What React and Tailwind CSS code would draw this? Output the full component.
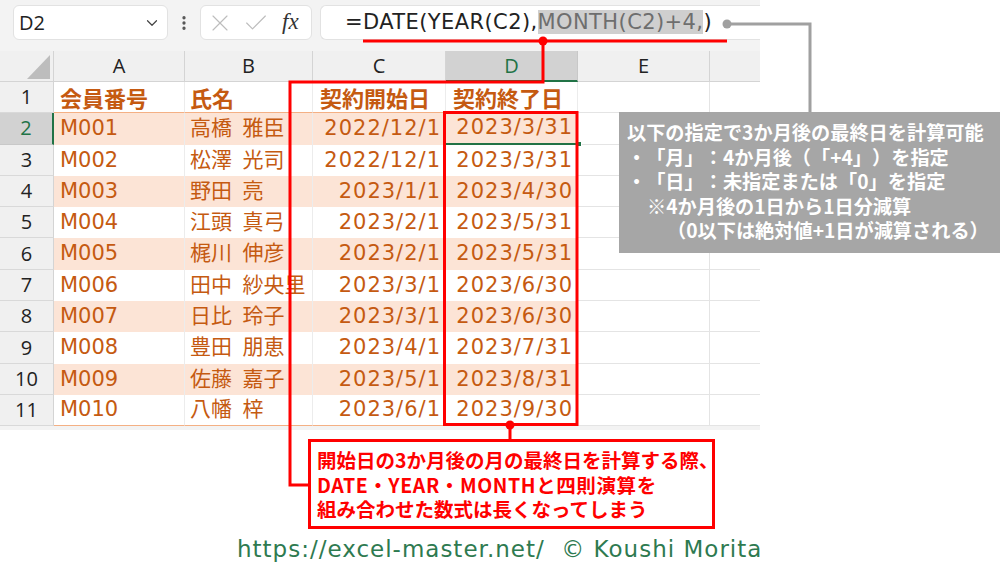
import React from "react";
import { ChevronDown, X, Check, EllipsisVertical } from "lucide-react";

const rows = [
  ["M001", "高橋 雅臣", "2022/12/1", "2023/3/31"],
  ["M002", "松澤 光司", "2022/12/1", "2023/3/31"],
  ["M003", "野田 亮", "2023/1/1", "2023/4/30"],
  ["M004", "江頭 真弓", "2023/2/1", "2023/5/31"],
  ["M005", "梶川 伸彦", "2023/2/1", "2023/5/31"],
  ["M006", "田中 紗央里", "2023/3/1", "2023/6/30"],
  ["M007", "日比 玲子", "2023/3/1", "2023/6/30"],
  ["M008", "豊田 朋恵", "2023/4/1", "2023/7/31"],
  ["M009", "佐藤 嘉子", "2023/5/1", "2023/8/31"],
  ["M010", "八幡 梓", "2023/6/1", "2023/9/30"],
];

const cellFont = { fontFamily: '"DejaVu Sans", "Noto Sans CJK JP", sans-serif' };
const uiFont = { fontFamily: '"Open Sans", "Noto Sans", sans-serif' };
const jpFont = { fontFamily: '"Noto Sans CJK JP", sans-serif' };

function ColHeader({ label, selected, last }) {
  return (
    <div
      className={
        "flex items-center justify-center text-[20px] border-r border-b " +
        (selected
          ? "bg-[#d2d2d2] text-[#217346] border-b-2 border-b-[#217346] border-r-[#c8c8c8]"
          : "bg-[#f0f0f0] text-[#222] border-r-[#d4d4d4] border-b-[#d4d4d4]") +
        (last ? " border-r-0" : "")
      }
      style={uiFont}
    >
      {label}
    </div>
  );
}

function RowHeader({ n, selected }) {
  return (
    <div
      className={
        "flex items-center justify-center text-[20px] border-b " +
        (selected
          ? "bg-[#d2d2d2] text-[#217346] border-b-[#c8c8c8] border-r-2 border-r-[#217346]"
          : "bg-[#f0f0f0] text-[#222] border-b-[#d9d9d9] border-r border-r-[#d4d4d4]")
      }
      style={uiFont}
    >
      {n}
    </div>
  );
}

export default function App() {
  return (
    <div className="relative w-[1000px] h-[563px] bg-white overflow-hidden [text-spacing-trim:space-all]">
      <div className="w-[760px] bg-[#f3f3f3]">
        {/* Formula bar */}
        <div className="flex items-start h-[51px] pt-[5px]">
          <div className="ml-[13px] w-[155px] h-[35px] bg-white rounded-[6px] border border-[#e2e2e2] flex items-center justify-between pl-[5px] pr-[6px]">
            <span className="text-[20px] text-[#222]" style={uiFont}>D2</span>
            <ChevronDown size={18} strokeWidth={1.6} className="text-[#444]" />
          </div>
          <div className="w-[32px] h-[35px] flex items-center justify-center text-[#555]">
            <EllipsisVertical size={18} strokeWidth={2.4} />
          </div>
          <div className="w-[112px] h-[35px] bg-white rounded-[6px] border border-[#e2e2e2] flex items-center pl-[5px] gap-[8px]">
            <X size={28} strokeWidth={1} className="text-[#bdbdbd]" />
            <Check size={28} strokeWidth={1} className="text-[#bdbdbd]" />
            <span className="italic text-[23px] text-[#333] ml-[4px]" style={{ fontFamily: '"Liberation Serif", serif' }}>fx</span>
          </div>
          <div className="ml-[8px] flex-1 h-[35px] bg-white rounded-l-[6px] border border-r-0 border-[#e2e2e2] flex items-center pl-[24px]">
            <span className="text-[21px] tracking-[0.4px] text-[#222] whitespace-nowrap" style={cellFont}>
              =DATE(YEAR(C2),
              <span className="bg-[#cfcfcf] text-[#6e6e6e]">MONTH(C2)+4,</span>)
            </span>
          </div>
        </div>

        {/* Grid */}
        <div className="grid grid-cols-[54px_131px_128px_133px_132px_132px_50px] grid-rows-[31px_repeat(11,31.3px)] bg-white">
          <div className="bg-[#f0f0f0] border-r border-b border-[#d4d4d4] relative">
            <svg width="54" height="31" className="absolute inset-0">
              <polygon points="50,4 50,28 27,28" fill="#bdbdbd" />
            </svg>
          </div>
          <ColHeader label="A" />
          <ColHeader label="B" />
          <ColHeader label="C" />
          <ColHeader label="D" selected />
          <ColHeader label="E" />
          <ColHeader label="" last />

          {/* Row 1 header */}
          <RowHeader n={1} />
          {["会員番号", "氏名", "契約開始日", "契約終了日"].map((t, i) => (
            <div
              key={t}
              className={
                "bg-white flex items-center font-bold text-[22px] text-[#c55a11] border-b border-b-[#f4b084] border-r border-r-[#ececec] whitespace-nowrap overflow-hidden " +
                (i === 0 ? "pl-[6px]" : i === 1 ? "pl-[5px]" : "pl-[7px]")
              }
              style={jpFont}
            >
              {t}
            </div>
          ))}
          <div className="border-r border-b border-[#e4e4e4]" />
          <div className="border-b border-[#e4e4e4]" />

          {rows.map((r, idx) => {
            const band = idx % 2 === 0;
            const last = idx === rows.length - 1;
            const bg = band ? "bg-[#fce4d6]" : "bg-white";
            const bottom = last ? " border-b border-b-[#f4b084]" : "";
            return (
              <React.Fragment key={r[0]}>
                <RowHeader n={idx + 2} selected={idx === 0} />
                <div className={`${bg} flex items-center pl-[6px] text-[21px] text-[#c55a11] border-r border-r-[#ececec]${bottom}`} style={cellFont}>
                  {r[0]}
                </div>
                <div className={`${bg} flex items-center pl-[5px] text-[21px] text-[#c55a11] whitespace-nowrap overflow-hidden border-r border-r-[#ececec]${bottom}`} style={cellFont}>
                  {r[1].replace(" ", "\u2002")}
                </div>
                <div className={`${bg} flex items-center justify-end pr-[4px] text-[21px] tracking-[1px] text-[#c55a11] border-r border-r-[#ececec]${bottom}`} style={cellFont}>
                  {r[2]}
                </div>
                <div className={`${bg} relative flex items-center justify-end pr-[5px] text-[21px] tracking-[1px] text-[#c55a11]${bottom}${idx === 0 ? " border-b-2 border-b-[#217346]" : ""}`} style={cellFont}>
                  {r[3]}
                  {idx === 0 && (
                    <div className="absolute right-[-4px] bottom-[-4px] w-[6px] h-[6px] bg-[#217346] border border-white" />
                  )}
                </div>
                <div className="bg-white border-r border-b border-[#e4e4e4]" />
                <div className="bg-white border-b border-[#e4e4e4]" />
              </React.Fragment>
            );
          })}
        </div>
        <div className="h-[4px] bg-[#f3f3f3]" />
      </div>

      {/* Annotation lines */}
      <svg width="1000" height="563" className="absolute inset-0 pointer-events-none">
        <polyline points="727,24 810,24 810,113" fill="none" stroke="#a0a0a0" strokeWidth="3" />
        <circle cx="727" cy="24" r="4.5" fill="#a0a0a0" />
        <line x1="363" y1="41" x2="727" y2="41" stroke="#ff0000" strokeWidth="3" />
        <circle cx="543" cy="41" r="4.5" fill="#ff0000" />
        <polyline points="543,41 543,82 290,82 290,485 309,485" fill="none" stroke="#ff0000" strokeWidth="3" />
        <rect x="444.5" y="112.5" width="132.5" height="312" fill="none" stroke="#ff0000" strokeWidth="3" />
        <circle cx="510" cy="425" r="4.5" fill="#ff0000" />
        <line x1="510" y1="425" x2="510" y2="440" stroke="#ff0000" strokeWidth="3" />
      </svg>

      {/* Gray note */}
      <div
        className="absolute left-[619px] top-[112px] w-[381px] h-[141px] bg-[#a6a6a6] text-white font-bold text-[19.2px] leading-[24.5px] pl-[8px] pt-[8px] whitespace-nowrap"
        style={jpFont}
      >
        <div>以下の指定で3か月後の最終日を計算可能</div>
        <div>・「月」：4か月後（「+4」）を指定</div>
        <div>・「日」：未指定または「0」を指定</div>
        <div className="pl-[20px]">※4か月後の1日から1日分減算</div>
        <div className="pl-[40px]">（0以下は絶対値+1日が減算される）</div>
      </div>

      {/* Red note */}
      <div
        className="absolute left-[308px] top-[439px] w-[407px] h-[90px] bg-white border-[3px] border-[#ff0000] text-[#ff0000] font-bold text-[19.5px] leading-[24.5px] pl-[6px] pt-[6px] whitespace-nowrap"
        style={jpFont}
      >
        <div>開始日の3か月後の月の最終日を計算する際、</div>
        <div className="tracking-[0.6px]">DATE・YEAR・MONTHと四則演算を</div>
        <div>組み合わせた数式は長くなってしまう</div>
      </div>

      {/* Footer */}
      <div className="absolute left-[237px] top-[532px] text-[23px] tracking-[1px] text-[#2e7a50] whitespace-nowrap" style={cellFont}>
        https://excel-master.net/&nbsp;&nbsp;© Koushi Morita
      </div>
    </div>
  );
}
